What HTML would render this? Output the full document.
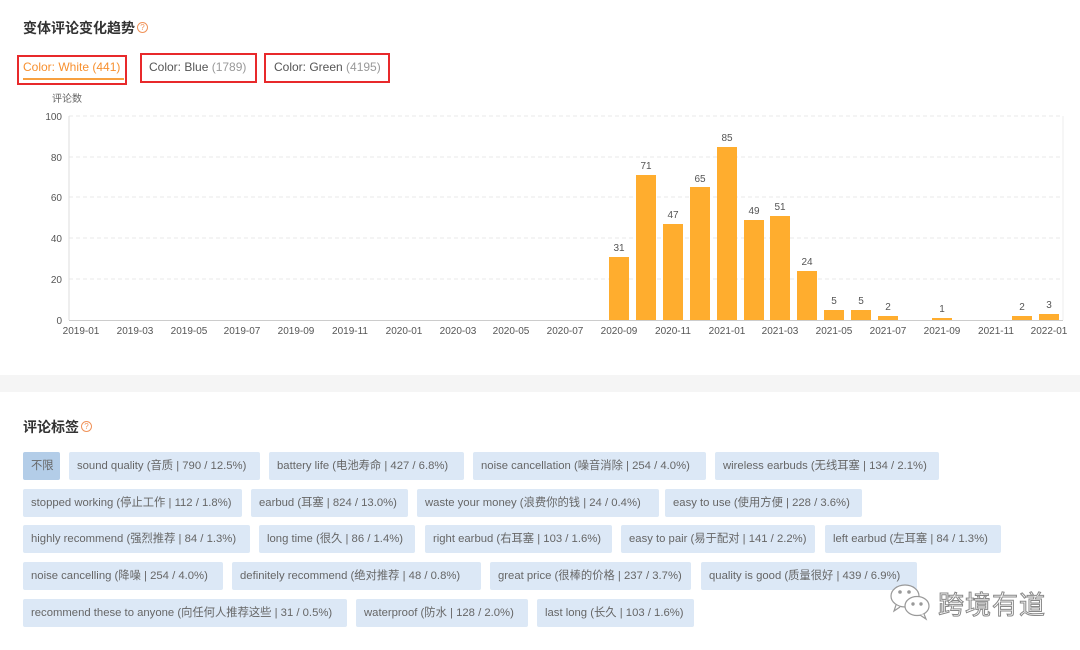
<!DOCTYPE html>
<html><head><meta charset="utf-8"><style>
body{margin:0;width:1080px;height:650px;background:#fff;font-family:"Liberation Sans","Noto Sans CJK SC",sans-serif;position:relative;overflow:hidden;color:#333}
.t{position:absolute;font-size:14px;font-weight:bold;color:#333}
.q{display:inline-block;width:9px;height:9px;border:1px solid #f0935a;border-radius:50%;color:#f0935a;font-size:8px;line-height:9px;text-align:center;font-weight:normal;vertical-align:3px;margin-left:2px}
.box{position:absolute;border:2px solid #e8292b;height:30px;box-sizing:border-box}
.tab{position:absolute;font-size:12px;color:#555;top:60px}
.tag{position:absolute;height:28px;line-height:28px;background:#dce8f6;color:#666;font-size:11.3px;padding-left:8px;box-sizing:border-box;white-space:nowrap;border-radius:2px}
</style></head><body>
<div class="t" style="left:23px;top:18px">变体评论变化趋势<span class="q">?</span></div>
<div class="box" style="left:17px;top:55px;width:110px"></div>
<div class="box" style="left:140px;top:53px;width:117px"></div>
<div class="box" style="left:264px;top:53px;width:126px"></div>
<div class="tab" style="left:23px;color:#f7902f">Color: White (441)</div>
<div style="position:absolute;left:23px;top:78px;width:101px;height:2px;background:#f7a040"></div>
<div class="tab" style="left:149px">Color: Blue <span style="color:#999">(1789)</span></div>
<div class="tab" style="left:274px">Color: Green <span style="color:#999">(4195)</span></div>
<svg style="position:absolute;left:0;top:0" width="1080" height="345" font-family="Liberation Sans, Noto Sans CJK SC, sans-serif">
<text x="52" y="102" font-size="10" fill="#666">评论数</text>
<g stroke="#e8e8e8" stroke-dasharray="4,3">
<line x1="69" y1="116" x2="1063" y2="116"/><line x1="69" y1="157" x2="1063" y2="157"/><line x1="69" y1="197" x2="1063" y2="197"/><line x1="69" y1="238" x2="1063" y2="238"/><line x1="69" y1="279" x2="1063" y2="279"/></g>
<line x1="69" y1="116" x2="69" y2="320" stroke="#ddd"/>
<line x1="1063" y1="116" x2="1063" y2="320" stroke="#eee"/>
<line x1="69" y1="320.5" x2="1063" y2="320.5" stroke="#ccc"/>
<g font-size="10" fill="#555" text-anchor="end">
<text x="62" y="120">100</text><text x="62" y="161">80</text><text x="62" y="201">60</text><text x="62" y="242">40</text><text x="62" y="283">20</text><text x="62" y="324">0</text></g>
<g font-size="10" fill="#555" text-anchor="middle">
<text x="81" y="334">2019-01</text><text x="135" y="334">2019-03</text><text x="189" y="334">2019-05</text><text x="242" y="334">2019-07</text><text x="296" y="334">2019-09</text><text x="350" y="334">2019-11</text><text x="404" y="334">2020-01</text><text x="458" y="334">2020-03</text><text x="511" y="334">2020-05</text><text x="565" y="334">2020-07</text><text x="619" y="334">2020-09</text><text x="673" y="334">2020-11</text><text x="727" y="334">2021-01</text><text x="780" y="334">2021-03</text><text x="834" y="334">2021-05</text><text x="888" y="334">2021-07</text><text x="942" y="334">2021-09</text><text x="996" y="334">2021-11</text><text x="1049" y="334">2022-01</text></g>
<g fill="#ffad2e">
<rect x="609" y="257" width="20" height="63"/><rect x="636" y="175" width="20" height="145"/><rect x="663" y="224" width="20" height="96"/><rect x="690" y="187" width="20" height="133"/><rect x="717" y="147" width="20" height="173"/><rect x="744" y="220" width="20" height="100"/><rect x="770" y="216" width="20" height="104"/><rect x="797" y="271" width="20" height="49"/><rect x="824" y="310" width="20" height="10"/><rect x="851" y="310" width="20" height="10"/><rect x="878" y="316" width="20" height="4"/><rect x="932" y="318" width="20" height="2"/><rect x="1012" y="316" width="20" height="4"/><rect x="1039" y="314" width="20" height="6"/></g>
<g font-size="10" fill="#555" text-anchor="middle">
<text x="619" y="251">31</text><text x="646" y="169">71</text><text x="673" y="218">47</text><text x="700" y="182">65</text><text x="727" y="141">85</text><text x="754" y="214">49</text><text x="780" y="210">51</text><text x="807" y="265">24</text><text x="834" y="304">5</text><text x="861" y="304">5</text><text x="888" y="310">2</text><text x="942" y="312">1</text><text x="1022" y="310">2</text><text x="1049" y="308">3</text></g>
</svg>
<div style="position:absolute;left:0;top:375px;width:1080px;height:17px;background:#f5f5f5"></div>
<div class="t" style="left:23px;top:417px">评论标签<span class="q">?</span></div>
<div class="tag" style="left:23px;top:452px;width:37px;background:#b3cde8">不限</div>
<div class="tag" style="left:69px;top:452px;width:191px">sound quality (音质 | 790 / 12.5%)</div>
<div class="tag" style="left:269px;top:452px;width:195px">battery life (电池寿命 | 427 / 6.8%)</div>
<div class="tag" style="left:473px;top:452px;width:233px">noise cancellation (噪音消除 | 254 / 4.0%)</div>
<div class="tag" style="left:715px;top:452px;width:224px">wireless earbuds (无线耳塞 | 134 / 2.1%)</div>
<div class="tag" style="left:23px;top:489px;width:219px">stopped working (停止工作 | 112 / 1.8%)</div>
<div class="tag" style="left:251px;top:489px;width:157px">earbud (耳塞 | 824 / 13.0%)</div>
<div class="tag" style="left:417px;top:489px;width:242px">waste your money (浪费你的钱 | 24 / 0.4%)</div>
<div class="tag" style="left:665px;top:489px;width:197px">easy to use (使用方便 | 228 / 3.6%)</div>
<div class="tag" style="left:23px;top:525px;width:227px">highly recommend (强烈推荐 | 84 / 1.3%)</div>
<div class="tag" style="left:259px;top:525px;width:156px">long time (很久 | 86 / 1.4%)</div>
<div class="tag" style="left:425px;top:525px;width:187px">right earbud (右耳塞 | 103 / 1.6%)</div>
<div class="tag" style="left:621px;top:525px;width:194px">easy to pair (易于配对 | 141 / 2.2%)</div>
<div class="tag" style="left:825px;top:525px;width:176px">left earbud (左耳塞 | 84 / 1.3%)</div>
<div class="tag" style="left:23px;top:562px;width:200px">noise cancelling (降噪 | 254 / 4.0%)</div>
<div class="tag" style="left:232px;top:562px;width:249px">definitely recommend (绝对推荐 | 48 / 0.8%)</div>
<div class="tag" style="left:490px;top:562px;width:201px">great price (很棒的价格 | 237 / 3.7%)</div>
<div class="tag" style="left:701px;top:562px;width:216px">quality is good (质量很好 | 439 / 6.9%)</div>
<div class="tag" style="left:23px;top:599px;width:324px">recommend these to anyone (向任何人推荐这些 | 31 / 0.5%)</div>
<div class="tag" style="left:356px;top:599px;width:172px">waterproof (防水 | 128 / 2.0%)</div>
<div class="tag" style="left:537px;top:599px;width:157px">last long (长久 | 103 / 1.6%)</div>
<svg style="position:absolute;left:888px;top:582px" width="46" height="40" fill="#fff" stroke="#999" stroke-width="1.2">
<ellipse cx="17" cy="14" rx="14" ry="11"/><path d="M8 23 L6 29 L12 25"/>
<ellipse cx="29" cy="24" rx="12" ry="9.5"/><path d="M36 32 L38 37 L32 33"/>
<circle cx="12" cy="10" r="1.2" fill="#999"/><circle cx="21" cy="10" r="1.2" fill="#999"/>
<circle cx="25" cy="22" r="1.1" fill="#999"/><circle cx="33" cy="22" r="1.1" fill="#999"/>
</svg>
<div style="position:absolute;left:938px;top:585px;font-size:26px;color:#fff;-webkit-text-stroke:1px #888;font-family:'Noto Sans CJK SC',sans-serif;letter-spacing:1px">跨境有道</div>
</body></html>
